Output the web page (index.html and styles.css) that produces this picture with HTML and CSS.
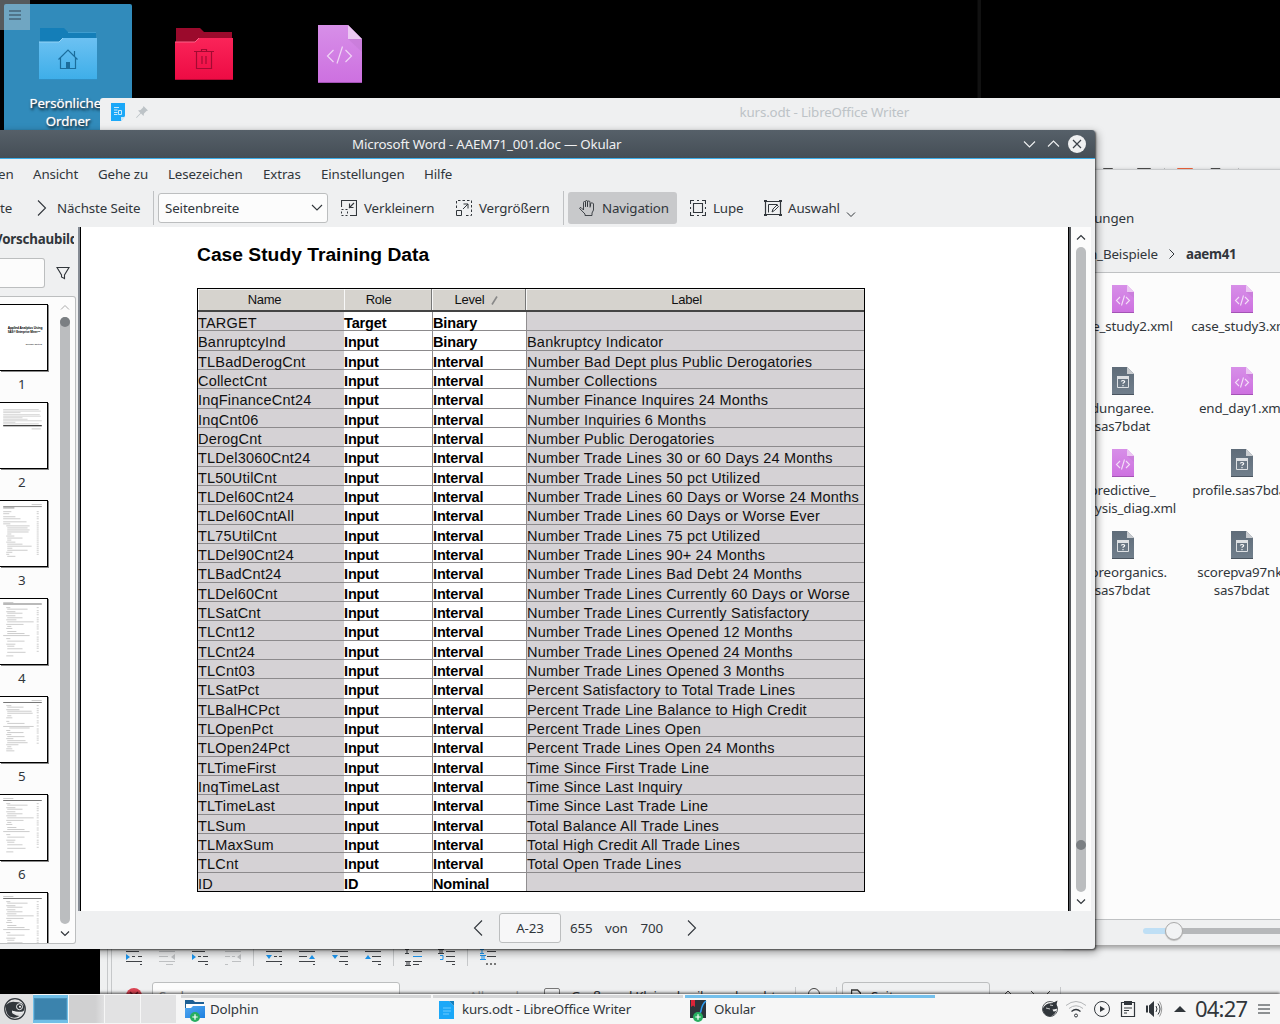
FILE: index.html
```html
<!DOCTYPE html>
<html lang="de">
<head>
<meta charset="utf-8">
<title>Desktop</title>
<link rel="stylesheet" href="styles.css">
</head>
<body>
<svg class="defs" width="0" height="0">
  <defs>
    <linearGradient id="gBlue" x1="0" y1="0" x2="0" y2="1"><stop offset="0" stop-color="#6cc1f2"/><stop offset="1" stop-color="#3daee9"/></linearGradient>
    <linearGradient id="gRed" x1="0" y1="0" x2="0" y2="1"><stop offset="0" stop-color="#fa2459"/><stop offset="1" stop-color="#ed0b44"/></linearGradient>
    <linearGradient id="gPink" x1="0" y1="0" x2="0" y2="1"><stop offset="0" stop-color="#d78fe8"/><stop offset="1" stop-color="#cd70e0"/></linearGradient>
    <linearGradient id="gSlate" x1="0" y1="0" x2="0" y2="1"><stop offset="0" stop-color="#5f6c79"/><stop offset="1" stop-color="#717f8c"/></linearGradient>
    <linearGradient id="gDolphin" x1="0" y1="0" x2="1" y2="1"><stop offset="0" stop-color="#53a9f0"/><stop offset="1" stop-color="#1d7fe0"/></linearGradient>
  </defs>
  <symbol id="xml" viewBox="0 0 22 28">
    <path d="M0 0h15l7 7v21H0z" fill="url(#gPink)"/><path d="M15 0l7 7h-7z" fill="#ecc8f3"/><path d="M15 7h7v6z" fill="#c57ad6" opacity=".6"/><path d="M0 27.5h22" stroke="#a353b5"/>
    <path d="M8 12l-3.500 3.500L8 19M14 12l3.500 3.500L14 19M12.500 10.500l-3 10" fill="none" stroke="#f4dff8" stroke-width="1.100"/>
  </symbol>
  <symbol id="unk" viewBox="0 0 22 28">
    <path d="M0 0h15l7 7v21H0z" fill="url(#gSlate)"/><path d="M15 0l7 7h-7z" fill="#c9ccd0"/><path d="M0 27.500h22" stroke="#4a5560"/>
    <path d="M5.500 9.500h11v11h-11z" fill="none" stroke="#dde0e3"/><path d="M5 9h12v3H5z" fill="#dde0e3"/>
    <path d="M9.300 14.500q0-1 1.700-1t1.700 1q0 .8-1 1.200-.7.300-.7 1.100M11 18v1.300" fill="none" stroke="#fff" stroke-width="1.100"/>
  </symbol>
  <symbol id="plus" viewBox="0 0 10 10"><circle cx="5" cy="5" r="5" fill="#27ae60"/><path d="M5 2.300v5.400M2.300 5h5.400" stroke="#fff" stroke-width="1.200"/></symbol>
</svg>

<div class="desktop">
  <i class="seam"></i>
  <div class="place place-home">
    <svg width="58" height="52" viewBox="0 0 58 52">
      <path d="M1 0h24l4 4h28v12H1z" fill="#147eb8"/><path d="M29 4.500h28" stroke="#3f9dcf"/>
      <path d="M0 14h20l4-4h34v42H0z" fill="url(#gBlue)"/><path d="M0 51.500h58" stroke="#2f8fc4"/><path d="M0 14h20l4-4" fill="none" stroke="#93d3f6"/>
      <path d="M19.500 31.500L29 22l9.500 9.500M21.500 30v10.500h15V30M35.500 23v5" fill="none" stroke="#1b6d9c" stroke-width="1.200"/><path d="M27 34h4v6h-4z" fill="#1b6d9c"/>
    </svg>
    <span>Persönlicher<br>Ordner</span>
  </div>
  <svg class="trash" width="58" height="52" viewBox="0 0 58 52">
    <path d="M1 0h24l4 4h28v12H1z" fill="#9b0a2c"/>
    <path d="M0 14h20l4-4h34v42H0z" fill="url(#gRed)"/><path d="M0 51.500h58" stroke="#b50833"/><path d="M0 14h20l4-4" fill="none" stroke="#fb6288"/>
    <path d="M19 23.500h20M26.500 23v-1.500h5V23M21.500 23.500v17h15v-17M27 28v8M31 28v8" fill="none" stroke="#a30a32" stroke-width="1.200"/>
  </svg>
  <svg class="xmlfile" width="44" height="58" viewBox="0 0 44 58">
    <path d="M0 0h30l14 14v44H0z" fill="url(#gPink)"/><path d="M30 0l14 14H30z" fill="#ecc8f3"/><path d="M30 14h14v13z" fill="#c57ad6" opacity=".6"/><path d="M0 57.500h44" stroke="#a353b5"/>
    <path d="M15.500 25l-6 6 6 6M27.500 25l6 6-6 6M24.500 21.500l-5.500 17" fill="none" stroke="#f0d5f5" stroke-width="1.200"/>
  </svg>
  <div class="corner"><i></i><i></i><i></i></div>

  <section class="win writer">
    <header class="w-title">
      <svg width="14" height="18" viewBox="0 0 14 18"><path d="M0 0h14v13l-4 5H0z" fill="#1ba8f8"/><path d="M10 18v-4h4z" fill="#c7e8fc"/><path d="M3 4.500h5M3 7h3.500M3 9.500h3.500M3 11.500h3.500" stroke="#c7e8fc"/><path d="M7.500 7.500h3v4h-3z" fill="none" stroke="#c7e8fc"/></svg>
      <svg class="pin" width="12" height="12" viewBox="0 0 12 12"><path d="M7.500 0L12 4.500l-1.500.5-2.500 2.500L7.500 10 5 7.600.600 12 0 11.400 4.400 7 2 4.500 4.500 4 7 1.500z" fill="#bdc3c7"/></svg>
      <span>kurs.odt - LibreOffice Writer</span>
    </header>
    <div class="w-body"><svg width="170" height="2" viewBox="0 0 170 2"><path d="M31.500 2V.500h9V2M65.500 2V.500h13V2M139 2V.500h9V2" fill="none" stroke="#4d4d4d"/><path d="M105.500 2V.500h15V2" fill="none" stroke="#f0643c"/><path d="M92.500 0v2M166.500 0v2" stroke="#bfc1c3"/></svg></div>
    <div class="w-tools">
      <svg width="384" height="18" viewBox="0 0 384 18">
        <g fill="none" stroke="#404347" stroke-width="1.100">
          <path d="M0 3.500h13M6 8.500h3M12 8.500h4M0 13.500h16M14 16.500h2M66 3.500h13M72 8.500h3M77 8.500h5M72 13.500h10M79 16.500h3"/>
          <path d="M140 3.500h16M148 8.500h3M153 8.500h3M140 13.500h16M154 16.500h2M173 3.500h16M173 8.500h8M173 13.500h16M187 16.500h2M206 3.500h16M214 8.500h8M213 13.500h9M219 16.500h3M239 3.500h16M246 8.500h9M246 13.500h9M252 16.500h3"/>
          <path d="M281 1.500v4m-2-4h4m-4 4h4M287 3.500h9M279 13.500h6m-6 4h6m-4-4v4m2-4v4M287 13.500h9M287 16.500h6M312 1.500h6m-6 4h6m-4-4v4m2-4v4M320 3.500h9M320 8.500h9M320 13.500h9M326 16.500h3M361 3.500h9M361 8.500h9"/>
        </g>
        <path d="M33 3.500h16M33 8.500h9M33 13.500h16M40 16.500h7M99 3.500h16M99 8.500h5M106 8.500h3M106 13.500h9M99 16.500h3" stroke="#bfc1c3"/>
        <path d="M0 6l4 3-4 3zM66 6l4 3-4 3zM140 7h6l-3 4zM206 7h6l-3 4zM183 11l3-4 3 4zM239 11l3-4 3 4z" fill="#1c95ee"/>
        <path d="M49 6l-4 3 4 3zM115 6l-4 3 4 3z" fill="#bfc1c3"/>
        <path d="M287 8.500h9M314 7.500h3v4m-3 0h3M356 1.500v4m-2-4h4m-4 4h4M354 7.500h6m-6 4h6m-4-4v4m2-4v4" stroke="#1c95ee" fill="none"/>
        <path d="M360 15h2v2h-2zM364 15h2v2h-2zM368 15h2v2h-2z" fill="#777"/>
        <path d="M127.500 0v18M267.500 0v18M341.500 0v18" stroke="#c6c8ca"/>
      </svg>
    </div>
    <div class="w-find">
      <svg class="stop" width="16" height="16" viewBox="0 0 16 16"><circle cx="8" cy="8" r="8" fill="#da4453"/><path d="M4 4l8 8M12 4l-8 8" stroke="#6d1520" stroke-width="1.500"/></svg>
      <div class="w-input">Suchen</div>
      <span class="alle">Alle suchen</span><i class="check"></i><span class="gross">Groß- und Kleinschreibung beachten</span>
      <i class="vsep"></i><i class="lens"></i><i class="vsep"></i>
      <div class="w-combo"><svg width="10" height="14" viewBox="0 0 10 14"><path d="M.500 1h6l3 3v9h-9z" fill="none" stroke="#333" stroke-width="1.400"/></svg>Seite</div>
      <svg class="updown" width="50" height="8" viewBox="0 0 50 8"><path d="M1 5l4-4 4 4M28 1l4 4M47 1l-4 4" fill="none" stroke="#444"/></svg><i class="vsep"></i>
    </div>
  </section>

  <section class="win dolphin">
    <div class="d-menu">Einstellungen</div>
    <div class="d-crumb"><span>n_Beispiele</span><svg width="6" height="10" viewBox="0 0 6 10"><path d="M.500.500L5 5 .500 9.500" fill="none" stroke="#31363b"/></svg><b>aaem41</b></div>
    <div class="d-files">
      <div><svg><use href="#xml"/></svg>case_study2.xml</div><div><svg><use href="#xml"/></svg>case_study3.xml</div>
      <div><svg><use href="#unk"/></svg>dungaree.<br>sas7bdat</div><div><svg><use href="#xml"/></svg>end_day1.xml</div>
      <div><svg><use href="#xml"/></svg>predictive_<br>analysis_diag.xml</div><div><svg><use href="#unk"/></svg>profile.sas7bdat</div>
      <div><svg><use href="#unk"/></svg>scoreorganics.<br>sas7bdat</div><div><svg><use href="#unk"/></svg>scorepva97nk.<br>sas7bdat</div>
    </div>
    <div class="d-status"><div class="fill"></div><div class="knob"></div><div class="track"></div></div>
  </section>

  <section class="win okular">
    <header class="o-title"><span>Microsoft Word - AAEM71_001.doc — Okular</span>
      <svg width="66" height="20" viewBox="0 0 66 20"><path d="M2 7.500l5.500 5.500L13 7.500M26 12.500L31.500 7l5.500 5.500" fill="none" stroke="#eff0f1" stroke-width="1.100"/><circle cx="55" cy="10" r="9" fill="#eff0f1"/><path d="M51 6l8 8M59 6l-8 8" stroke="#3a4147" stroke-width="1.200"/></svg>
    </header>
    <nav class="o-menu"><span class="m0">en</span><span class="m1">Ansicht</span><span class="m2">Gehe zu</span><span class="m3">Lesezeichen</span><span class="m4">Extras</span><span class="m5">Einstellungen</span><span>Hilfe</span></nav>
    <div class="o-tools">
      <span class="t-te">te</span>
      <span class="tool t-next"><svg width="10" height="16" viewBox="0 0 10 16"><path d="M1 .500L8.500 8 1 15.500" fill="none" stroke="#31363b" stroke-width="1.100"/></svg>Nächste Seite</span>
      <i class="tsep"></i>
      <div class="combo">Seitenbreite<svg width="12" height="8" viewBox="0 0 12 8"><path d="M1 1l5 5 5-5" fill="none" stroke="#31363b" stroke-width="1.100"/></svg></div>
      <span class="tool t-out"><svg width="16" height="16" viewBox="0 0 16 16"><path d="M.500 7V.500h15v15H9M13 3L8 8M8.500 3.500v4h4" fill="none" stroke="#31363b" stroke-width="1.100"/><path d="M.500 9.500h6v6h-6z" fill="none" stroke="#31363b" stroke-dasharray="2 2"/></svg>Verkleinern</span>
      <span class="tool t-in"><svg width="16" height="16" viewBox="0 0 16 16"><path d="M.500 8V.500h15v15H8" fill="none" stroke="#31363b" stroke-dasharray="2.500 2"/><path d="M.500 10.500h5v5h-5zM7 9l5-5M7.500 4h4.500v4.500" fill="none" stroke="#31363b"/></svg>Vergrößern</span>
      <i class="tsep"></i>
      <span class="tool t-nav"><svg width="16" height="16" viewBox="0 0 16 16"><path d="M4.500 10V2.500q0-1 1-1t1 1V7M6.500 6V1.500q0-1 1-1t1 1V7M8.500 6V2q0-1 1.200-1t1.300 1v5.500M11.500 6.500V4q.2-1.200 1.300-1.200t1.700 1V10l-1.500 3v2.500H6V14L.600 8.500q0-1 1.400-1L4.500 10" fill="none" stroke="#31363b" stroke-width=".9"/></svg>Navigation</span>
      <span class="tool t-lupe"><svg width="16" height="16" viewBox="0 0 16 16"><path d="M3.500 3.500h9v9h-9zM.500 4V.500H4M12 .500h3.500V4M15.500 12v3.500H12M4 15.500H.500V12M.500 7v2M15.500 7v2M7 .500h2M7 15.500h2" fill="none" stroke="#31363b" stroke-width="1.100"/></svg>Lupe</span>
      <span class="tool t-sel"><svg width="18" height="16" viewBox="0 0 18 16"><path d="M1.500 1.500h15v13h-15z" fill="none" stroke="#31363b" stroke-width="1.200"/><path d="M4.500 12.500v-8h9M8 12l1-3 4-4 1.500 1.500-4 4z" fill="none" stroke="#31363b"/><path d="M0 0h3v2H0zM15 0h3v2h-3zM0 14h3v2H0zM15 14h3v2h-3z" fill="#31363b"/></svg>Auswahl<svg class="drop" width="10" height="6" viewBox="0 0 10 6"><path d="M1 .500l4 4 4-4" fill="none" stroke="#31363b"/></svg></span>
    </div>
    <div class="o-main">
      <aside class="side">
        <div class="s-head"><b>Vorschaubilder</b></div>
        <div class="s-filter"><div></div><svg width="14" height="14" viewBox="0 0 14 14"><path d="M1 1.500h12L8.500 9v3.500l-3-1.500V9z" fill="none" stroke="#31363b" stroke-width="1.100"/></svg></div>
        <div class="s-list">
          <div class="thumbs">
            <svg class="th" viewBox="0 0 46 64"><g font-family="Liberation Sans" font-weight="bold" font-size="3"><text x="7.500" y="24" textLength="34" lengthAdjust="spacingAndGlyphs">Applied Analytics Using</text><text x="7.500" y="28" textLength="32" lengthAdjust="spacingAndGlyphs">SAS® Enterprise Miner™</text></g><text x="25" y="39.500" font-family="Liberation Sans" font-size="2.400" textLength="16" lengthAdjust="spacingAndGlyphs">Course Notes</text></svg><span>1</span>
            <svg class="th" viewBox="0 0 46 64"><path d="M3 6.500h35M3 8h37M3 9.500h17M3 11.500h36M3 13h37M3 14.500h19M3 16h24M3 17.500h38M3 19h12M3 20.500h35" stroke="#bbb" stroke-width=".6"/><path d="M3 22.500h38" stroke="#000"/><path d="M31 25.500h9" stroke="#bbb" stroke-width=".7"/></svg><span>2</span>
            <svg class="th" viewBox="0 0 46 64"><path d="M31 3.500h10M3 10.500h8M3 12.500h6M3 15.500h12M3 17.500h17M3 20.500h23M3 22.500h7M6 24.500h23M7 26.500h20M7 28.500h22M7 30.500h21M7 32.500h4M6 34.500h8M7 36.500h15M7 38.500h4M6 40.500h9M7 42.500h15M7 44.500h24M7 46.500h5M7 48.500h20M6 50.500h6M6 52.500h3M7 54.500h8M36 10.500h2m-2 2h2m-2 3h2m-2 2h2m-2 3h2m-2 2h2m-2 2h2m-2 2h2m-2 2h2m-2 2h2m-2 2h2m-2 2h2m-2 2h2m-2 2h2m-2 2h2m-2 2h2m-2 2h2m-2 2h2m-2 2h2m-2 2h2m-2 2h2" stroke="#b8b8b8" stroke-width=".7"/><path d="M3 5.500h38M3 6.800h11" stroke="#888" stroke-width=".9"/></svg><span>3</span>
            <svg class="th" viewBox="0 0 46 64"><path id="toc" d="M3 3.500h10M6 8.500h4M7 10h20M6 12.500h9M7 14h15M6 16.500h9M7 18.500h15M6 20.500h10M7 22.500h26M6 25h17M7 27h4M6 29h6M7 32h9M7 34h17M3 36h26M6 39h4M7 41.500h17M6 44.500h9M7 46.500h7M7 49h15M7 52.500h18M6 56h7M36 8.500h2m-2 3h2m-2 2h2m-2 2h2m-2 3h2m-2 2h2m-2 2h2m-2 3h2m-2 2h2m-2 2h2m-2 3h2m-2 2h2m-2 3h2m-2 2h2m-2 2h2m-2 3h2m-2 2h2m-2 2h2m-2 3h2" stroke="#b8b8b8" stroke-width=".7" fill="none"/><path d="M3 5h38" stroke="#777"/></svg><span>4</span>
            <svg class="th" viewBox="0 0 46 64"><path d="M31 3.500h10M6 8.500h5M7 10h16M6 12.500h13M7 14h24M7 16h25M7 18.500h4M6 20.500h6M6 24h3M7 26h17M3 29h30M9 30.500h20M6 33h4M7 35h16M6 37h5M7 39h17M6 41h7M7 43h18M7 45h20M6 47h12M7 49h4M6 51h6M6 53h8M36 8.500h2m-2 3h2m-2 2h2m-2 2h2m-2 3h2m-2 2h2m-2 3h2m-2 2h2m-2 3h2m-2 3h2m-2 2h2m-2 2h2m-2 3h2m-2 2h2m-2 2h2m-2 3h2" stroke="#b8b8b8" stroke-width=".7"/><path d="M3 5.500h38" stroke="#777"/></svg><span>5</span>
            <svg class="th" viewBox="0 0 46 64"><use href="#toc"/><path d="M3 5.500h38" stroke="#777"/></svg><span>6</span>
            <svg class="th" viewBox="0 0 46 64"><use href="#toc"/><path d="M3 5.500h38" stroke="#777"/></svg>
          </div>
          <div class="sb side-sb">
            <svg width="10" height="6" viewBox="0 0 10 6"><path d="M1 5.500l4-4 4 4" fill="none" stroke="#aaa"/></svg><div class="groove"><i></i></div><svg width="10" height="6" viewBox="0 0 10 6"><path d="M1 .500l4 4 4-4" fill="none" stroke="#31363b" stroke-width="1.200"/></svg>
          </div>
        </div>
      </aside>
      <div class="right">
        <div class="view">
          <article class="page">
            <h1>Case Study Training Data</h1>
            <div class="grid">
              <div class="r h"><div>Name</div><div>Role</div><div>Level <svg width="8" height="9" viewBox="0 0 8 9"><path d="M1 8.500L6 .500" stroke="#888" stroke-width="1.600"/></svg></div><div>Label</div></div>
              <div class="r"><div>TARGET</div><div>Target</div><div>Binary</div><div></div></div>
              <div class="r"><div>BanruptcyInd</div><div>Input</div><div>Binary</div><div>Bankruptcy Indicator</div></div>
              <div class="r"><div>TLBadDerogCnt</div><div>Input</div><div>Interval</div><div>Number Bad Dept plus Public Derogatories</div></div>
              <div class="r"><div>CollectCnt</div><div>Input</div><div>Interval</div><div>Number Collections</div></div>
              <div class="r"><div>InqFinanceCnt24</div><div>Input</div><div>Interval</div><div>Number Finance Inquires 24 Months</div></div>
              <div class="r"><div>InqCnt06</div><div>Input</div><div>Interval</div><div>Number Inquiries 6 Months</div></div>
              <div class="r"><div>DerogCnt</div><div>Input</div><div>Interval</div><div>Number Public Derogatories</div></div>
              <div class="r"><div>TLDel3060Cnt24</div><div>Input</div><div>Interval</div><div>Number Trade Lines 30 or 60 Days 24 Months</div></div>
              <div class="r"><div>TL50UtilCnt</div><div>Input</div><div>Interval</div><div>Number Trade Lines 50 pct Utilized</div></div>
              <div class="r"><div>TLDel60Cnt24</div><div>Input</div><div>Interval</div><div>Number Trade Lines 60 Days or Worse 24 Months</div></div>
              <div class="r"><div>TLDel60CntAll</div><div>Input</div><div>Interval</div><div>Number Trade Lines 60 Days or Worse Ever</div></div>
              <div class="r"><div>TL75UtilCnt</div><div>Input</div><div>Interval</div><div>Number Trade Lines 75 pct Utilized</div></div>
              <div class="r"><div>TLDel90Cnt24</div><div>Input</div><div>Interval</div><div>Number Trade Lines 90+ 24 Months</div></div>
              <div class="r"><div>TLBadCnt24</div><div>Input</div><div>Interval</div><div>Number Trade Lines Bad Debt 24 Months</div></div>
              <div class="r"><div>TLDel60Cnt</div><div>Input</div><div>Interval</div><div>Number Trade Lines Currently 60 Days or Worse</div></div>
              <div class="r"><div>TLSatCnt</div><div>Input</div><div>Interval</div><div>Number Trade Lines Currently Satisfactory</div></div>
              <div class="r"><div>TLCnt12</div><div>Input</div><div>Interval</div><div>Number Trade Lines Opened 12 Months</div></div>
              <div class="r"><div>TLCnt24</div><div>Input</div><div>Interval</div><div>Number Trade Lines Opened 24 Months</div></div>
              <div class="r"><div>TLCnt03</div><div>Input</div><div>Interval</div><div>Number Trade Lines Opened 3 Months</div></div>
              <div class="r"><div>TLSatPct</div><div>Input</div><div>Interval</div><div>Percent Satisfactory to Total Trade Lines</div></div>
              <div class="r"><div>TLBalHCPct</div><div>Input</div><div>Interval</div><div>Percent Trade Line Balance to High Credit</div></div>
              <div class="r"><div>TLOpenPct</div><div>Input</div><div>Interval</div><div>Percent Trade Lines Open</div></div>
              <div class="r"><div>TLOpen24Pct</div><div>Input</div><div>Interval</div><div>Percent Trade Lines Open 24 Months</div></div>
              <div class="r"><div>TLTimeFirst</div><div>Input</div><div>Interval</div><div>Time Since First Trade Line</div></div>
              <div class="r"><div>InqTimeLast</div><div>Input</div><div>Interval</div><div>Time Since Last Inquiry</div></div>
              <div class="r"><div>TLTimeLast</div><div>Input</div><div>Interval</div><div>Time Since Last Trade Line</div></div>
              <div class="r"><div>TLSum</div><div>Input</div><div>Interval</div><div>Total Balance All Trade Lines</div></div>
              <div class="r"><div>TLMaxSum</div><div>Input</div><div>Interval</div><div>Total High Credit All Trade Lines</div></div>
              <div class="r"><div>TLCnt</div><div>Input</div><div>Interval</div><div>Total Open Trade Lines</div></div>
              <div class="r"><div>ID</div><div>ID</div><div>Nominal</div><div></div></div>
            </div>
          </article>
          <div class="sb main-sb">
            <svg width="10" height="6" viewBox="0 0 10 6"><path d="M1 5.500l4-4 4 4" fill="none" stroke="#31363b" stroke-width="1.200"/></svg><div class="groove"><i></i></div><svg width="10" height="6" viewBox="0 0 10 6"><path d="M1 .500l4 4 4-4" fill="none" stroke="#31363b" stroke-width="1.200"/></svg>
          </div>
        </div>
        <div class="pager-bar">
          <svg width="10" height="16" viewBox="0 0 10 16"><path d="M9 .500L1.500 8 9 15.500" fill="none" stroke="#31363b" stroke-width="1.100"/></svg>
          <div class="pg">A-23</div><span class="p1">655</span><span class="p2">von</span><span class="p3">700</span>
          <svg width="10" height="16" viewBox="0 0 10 16"><path d="M1 .500L8.500 8 1 15.500" fill="none" stroke="#31363b" stroke-width="1.100"/></svg>
        </div>
      </div>
    </div>
  </section>

  <footer class="panel">
    <div class="launch">
      <svg width="24" height="24" viewBox="0 0 24 24"><circle cx="12" cy="12" r="10.300" fill="none" stroke="#31363b" stroke-width="1.200"/><path d="M3 8q4-4 9-3 8 0 9.500 5 .5 5-4 4.700-4 .3-8-.7-1.500 1.500 1 3 3 2 6 2-5 3-10 .5Q2 16 3 8z" fill="#31363b"/><circle cx="16.500" cy="9.700" r="3" fill="#31363b" stroke="#eff0f1"/><circle cx="17" cy="9.700" r="1" fill="#fff"/><path d="M9 14q5 3 10 1.500" fill="none" stroke="#eff0f1"/></svg>
    </div>
    <div class="desks"><i class="on"><u></u></i><i class="two"></i><i></i><i></i></div>
    <div class="task t1"><svg width="22" height="24" viewBox="0 0 22 24"><path d="M0 1h8l2 2h9v6H0z" fill="#1d5f94"/><path d="M1 5h18v4H1z" fill="#fff"/><path d="M0 9h6l2-2h12v12H0z" fill="url(#gDolphin)"/><use href="#plus" x="5" y="13" width="10" height="10"/></svg><span>Dolphin</span></div>
    <div class="task t2"><svg width="16" height="20" viewBox="0 0 16 20"><path d="M0 1h10l5 5v13H0z" fill="#1ba8f8"/><path d="M10 1h5v5z" fill="#137fbe"/><path d="M4 8h8M4 11h8M4 14h6" stroke="#6ccbff"/></svg><span>kurs.odt - LibreOffice Writer</span></div>
    <div class="task t3"><svg width="18" height="24" viewBox="0 0 18 24"><path d="M1 1h16v18H1z" fill="#2d343b"/><path d="M2 1h4v7L4 6.500 2 8z" fill="#da2438"/><path d="M17 2q-4 3-5 10-1 4-5 5" fill="none" stroke="#2d9df2" stroke-width="1.500"/><use href="#plus" x="4" y="13" width="10" height="10"/></svg><span>Okular</span></div>
    <div class="tray">
      <svg width="146" height="24" viewBox="0 0 146 24" fill="none" stroke="#31363b">
        <circle cx="8" cy="12" r="7.500" stroke-width=".8"/><path d="M.500 13q1-5 6-6.500 5 0 9-3l-1 4 1 4q-3 1-5 1l1 2q2 0 3-1-2 5-6.500 6-5 0-7.500-6.500z" fill="#31363b" stroke="none"/><path d="M8 8l3 .500M4 11l4 1" stroke="#eee" stroke-width=".8"/>
        <circle cx="34" cy="18.500" r="1.500"/><path d="M29.500 14.500q4.500-4 9 0" stroke-width="1.200"/><path d="M27 11.500q7-5.500 14 0M24 8.500q10-8 20 0" stroke="#b4b6b8"/>
        <circle cx="60" cy="12" r="7.500"/><path d="M58 9l5 3-5 3z" fill="#31363b" stroke="none"/>
        <path d="M79.500 5.500h13v14h-13z" stroke-width="1.200"/><path d="M82 4h8v4h-8z" fill="#31363b" stroke="none"/><path d="M82 11h8M82 13.500h5M82 16h3"/>
        <path d="M104 8.500h2v7h-2zM107 8.500l5-4.500v16l-5-4.500z" fill="#31363b" stroke="none"/><path d="M114 9q2 3 0 6M116 6.500q4 5.500 0 11"/><path d="M117.500 4.500q4.500 7.500 0 15" stroke="#999"/>
        <path d="M132 15l6-6 6 6z" fill="#31363b" stroke="none"/>
      </svg>
      <span class="clock">04:27</span>
      <div class="burger"><i></i><i></i><i></i></div>
    </div>
  </footer>
</div>
</body>
</html>
```
FILE: styles.css
```css
* { box-sizing: border-box; }
body { margin: 0; background: #000; }
svg { display: block; flex: none; }
.defs { position: absolute; }
.desktop { position: relative; width: 1280px; height: 1024px; overflow: hidden; background: #000; font: 13.33px/18px "Noto Sans", sans-serif; letter-spacing: -.12px; color: #31363b; white-space: nowrap; }
.seam { position: absolute; left: 977px; top: 0; width: 4px; height: 98px; background: #111; border-left: 1px solid #080808; }

/* desktop icons */
.place { position: absolute; left: 4px; top: 4px; width: 128px; height: 140px; padding-top: 24px; border-radius: 2px; background: #318bbb; color: #fff; text-align: center; display: flex; flex-direction: column; align-items: center; gap: 14px; }
.place span { text-shadow: 1px 2px 3px #000, 0 0 1px #fff; letter-spacing: -.1px; }
.trash { position: absolute; left: 175px; top: 28px; }
.xmlfile { position: absolute; left: 318px; top: 25px; }
.corner { position: absolute; left: 0; top: 0; width: 30px; height: 30px; padding: 10px 9px; background: rgba(190,200,205,.45); display: flex; flex-direction: column; gap: 2px; }
.corner i { height: 2px; background: #50748a; }

.win { position: absolute; background: #eff0f1; display: flex; flex-direction: column; }

/* writer */
.writer { left: 100px; top: 98px; width: 1180px; height: 930px; border-radius: 3px 0 0 0; }
.w-title { height: 31px; display: flex; align-items: center; padding: 0 0 3px 11px; color: #bdc3c7; }
.pin { margin-left: 11px; }
.w-title span { margin-left: 591.500px; letter-spacing: -.15px; }
.w-body { height: 819px; padding: 39px 0 0 972px; }
.w-tools { height: 20px; margin-left: 7px; border-left: 1px solid #c6c8ca; padding: 0 0 0 18px; box-shadow: inset 3px 0 #eff0f1, inset 4px 0 #c6c8ca; }
.w-find { margin-left: 7px; flex: 1; display: flex; align-items: flex-start; border-left: 1px solid #c6c8ca; box-shadow: inset 3px 0 #eff0f1, inset 4px 0 #c6c8ca; padding: 14px 0 0 18px; color: #31363b; }
.stop { margin-top: 6px; }
.w-input { margin-left: 10px; width: 248px; height: 30px; border: 1px solid #bcbebf; border-radius: 3px; background: #fcfcfc; padding: 4px 6px; color: #8b8e91; }
.alle { width: 73px; margin: 5px 0 0 69px; color: #a5a8aa; }
.check { width: 16px; height: 16px; margin: 6px 0 0 2px; border: 1px solid #777; border-radius: 2px; }
.gross { width: 222px; margin: 5px 0 0 11px; letter-spacing: -.3px; }
.vsep { width: 1px; height: 20px; background: #c6c8ca; margin: 5px 12px 0 2px; }
.lens { width: 12px; height: 12px; border: 1px solid #444; border-radius: 50%; margin: 6px 14px 0 0; }
.w-combo { width: 148px; height: 30px; margin-left: -7px; border: 1px solid #bcbebf; border-radius: 3px; display: flex; gap: 10px; padding: 4px 8px; }
.w-combo svg { margin-top: 2px; }
.updown { margin: 8px 5px 0 13px; }

/* dolphin */
.dolphin { left: 1063px; top: 169px; width: 238px; height: 777px; border-top: 1px solid #c8cacc; border-bottom: 1px solid #aaa; box-shadow: 0 2px 5px rgba(0,0,0,.35); }
.d-menu { height: 66px; padding-top: 39px; width: 71px; display: flex; justify-content: flex-end; }
.d-crumb { height: 36px; display: flex; align-items: center; padding: 2px 0 2px 26px; }
.d-crumb span { width: 80px; }
.d-crumb b { margin-left: 11px; letter-spacing: -.3px; }
.d-files { height: 648px; flex: none; background: #fcfcfc; border: solid #bfc1c3; border-width: 1px 0; display: grid; grid-template-columns: 119px 119px; grid-auto-rows: 82px; padding-top: 12px; }
.d-files div { margin: 0 -20px; text-align: center; }
.d-files svg { width: 22px; height: 28px; margin: 0 auto 4px; }
.d-status { flex: 1; display: flex; align-items: center; padding: 0 0 4px 80px; }
.d-status .fill { width: 24px; height: 6px; border-radius: 3px 0 0 3px; background: #bfdff5; }
.knob { width: 18px; height: 18px; margin: 0 -1px 0 -2px; border: 1px solid #aaa; border-radius: 50%; background: #f2f3f4; box-shadow: 0 1px 1px #bbb; z-index: 1; }
.track { flex: 1; height: 6px; background: #b6b8ba; }

/* okular */
.okular { left: 0; top: 130px; width: 1095px; height: 819px; border-radius: 0 3px 3px 0; box-shadow: 1px 1px 2px rgba(0,0,0,.6), 2px 3px 9px rgba(0,0,0,.4); }
.o-title { height: 29px; border-bottom: 1px solid #3daee9; border-radius: 0 3px 0 0; background: linear-gradient(#566069, #454e56); color: #eff0f1; display: flex; align-items: center; padding: 0 7px 0 352px; justify-content: space-between; letter-spacing: -.18px; }
.o-menu { height: 30px; display: flex; align-items: center; }
.m0 { width: 33px; text-indent: -2px; } .m1 { width: 65px; } .m2 { width: 70px; } .m3 { width: 95px; } .m4 { width: 58px; } .m5 { width: 103px; }
.o-tools { height: 38px; display: flex; align-items: center; }
.t-te { width: 37px; }
.tool { display: flex; align-items: center; gap: 8px; flex: none; height: 32px; }
.t-next { width: 116px; gap: 10px; }
.tsep { width: 1px; height: 34px; background: #bfc1c3; }
.combo { width: 170px; height: 30px; margin-left: 4px; padding: 0 4px 0 6px; background: #fcfcfc; border: 1px solid #bcbebf; border-radius: 3px; display: flex; align-items: center; justify-content: space-between; }
.t-out { margin-left: 13px; width: 115px; gap: 7px; }
.t-in { width: 107px; gap: 7px; }
.t-nav { margin-left: 4px; width: 109px; padding-left: 11px; gap: 7px; background: #c8c9cb; border-radius: 3px; }
.t-lupe { margin-left: 13px; width: 74px; gap: 7px; }
.t-sel { gap: 6px; }
.drop { margin: 13px 0 0 0; }
.o-main { flex: 1; display: flex; min-height: 0; }
.side { width: 77px; flex: none; display: flex; flex-direction: column; height: 717px; }
.s-head { height: 31px; padding-top: 3px; width: 74px; overflow: hidden; letter-spacing: -.2px; }
.s-head b { margin-left: -6px; }
.s-filter { display: flex; align-items: center; height: 30px; gap: 11px; }
.s-filter div { width: 45px; height: 30px; border: 1px solid #bcbebf; border-left: 0; border-radius: 0 3px 3px 0; background: #fcfcfc; }
.s-list { margin-top: 8px; height: 648px; width: 76px; border: 1px solid #bcbebf; border-left: 0; border-radius: 0 3px 3px 0; background: #fcfcfc; display: flex; overflow: hidden; }
.thumbs { width: 54px; padding-top: 7px; overflow: hidden; }
.th { width: 48px; height: 67px; background: #fff; border: 1px solid #000; border-left: 0; box-shadow: 1px 1px #888; }
.thumbs span { display: block; height: 31px; line-height: 27px; padding-left: 18px; }
.sb { display: flex; flex-direction: column; align-items: center; }
.groove { width: 10px; flex: 1; border-radius: 5px; background: #bbbdbf; }
.groove i { display: block; width: 10px; height: 10px; border-radius: 50%; background: #7b7f83; }
.side-sb { width: 21px; padding: 7px 0 6px; gap: 7px; }
.right { flex: 1; display: flex; flex-direction: column; }
.view { height: 684px; display: flex; padding-right: 4px; }
.page { width: 993px; margin-left: 1px; background: #fff; border-left: 2px solid #858b94; border-right: 2px solid #55585c; box-shadow: inset 1px 0 #000, inset -1px 0 #000; padding: 17px 0 0 117px; color: #000; }
.page h1 { margin: 0; height: 44px; font: bold 19.250px/22px "Liberation Sans", sans-serif; letter-spacing: 0; }
.grid { width: 668px; height: 604px; border: 1px solid #000; background: #fff; font: 14.500px/19px "Liberation Sans", sans-serif; letter-spacing: .2px; display: flex; flex-direction: column; color: #111; }
.r { flex: 1; min-height: 0; display: grid; grid-template-columns: 146px 88px 94px 338px; grid-template-rows: minmax(0, 1fr); border-bottom: 1px solid #8c8a8c; }
.r:last-child { border-bottom: 0; }
.r div { min-height: 0; border-left: 1px solid #908e90; line-height: 22.500px; }
.r div:nth-child(1), .r div:nth-child(2) { border-left: 0; }
.r div:nth-child(1), .r div:nth-child(4) { background: #d5d2d5; }
.r:not(.h) div:nth-child(2), .r:not(.h) div:nth-child(3) { font-weight: bold; color: #000; letter-spacing: -.15px; }
.r.h { flex: 0 0 23px; border-bottom: 2px solid #444; font-size: 13px; letter-spacing: -.25px; }
.r.h div { background: #d6d3ce; border-left: 1px solid #f8f8f8; border-right: 1px solid #777; box-shadow: inset 0 1px #eee; padding: 1px 14px 0 0; display: flex; justify-content: center; gap: 7px; align-items: center; }
.r.h div:first-child { border-right: 0; }
.r.h div:nth-child(2) { padding-right: 19px; }
.r.h div:nth-child(3) { padding-right: 4px; }
.r.h div:nth-child(4) { padding-right: 18px; border-right: 0; }
.main-sb { width: 20px; background: #fcfcfc; padding: 7px 0 6px; gap: 7px; }
.main-sb .groove { padding-top: 593px; }
.pager-bar { height: 38px; display: flex; align-items: center; padding: 0 0 4px 396px; }
.pg { width: 62px; height: 30px; margin: 0 9px 0 16px; border: 1px solid #bcbebf; border-radius: 3px; background: #f7f7f8; text-align: center; line-height: 28px; }
.p1 { width: 35px; } .p2 { width: 35.500px; } .p3 { width: 46.500px; }

/* panel */
.panel { position: absolute; left: 0; top: 994px; width: 1280px; height: 30px; background: #f6f6f6; display: flex; box-shadow: 0 -1px 3px rgba(0,0,0,.7); }
.launch { width: 33px; padding: 3px; background: #e0e0e1; }
.desks { display: flex; gap: 1px; width: 148px; padding-top: 1px; }
.desks > i { width: 35px; height: 28px; background: #e2e2e3; }
.desks .on { background: #70bfe7; padding: 3px 1px; }
.desks u { display: block; height: 22px; background: #3b83ad; border: 1px solid #4a91ba; }
.desks .two { background: linear-gradient(90deg, #d0d0d1 75%, #e0e0e1); }
.task { width: 250px; height: 29px; margin: 1px 2px 0 0; border-top: 3px solid #d5d6d7; display: flex; align-items: center; gap: 3px; padding: 0 0 1px 4px; }
.task svg { margin-top: 1px; }
.task span { margin-top: -3px; }
.t2 { padding-left: 6px; gap: 7px; letter-spacing: -.17px; }
.t2 svg { margin-top: -1px; }
.t3 { border-color: #74c0ec; padding-left: 4px; gap: 7px; }
.tray { flex: 1; display: flex; align-items: center; padding-left: 105px; }
.clock { font-size: 22px; line-height: 28px; margin: -2px 0 0 7px; width: 54px; letter-spacing: -.8px; }
.burger { margin-left: 9px; width: 12px; display: flex; flex-direction: column; gap: 2px; }
.burger i { height: 2px; background: #8d9092; }
```
